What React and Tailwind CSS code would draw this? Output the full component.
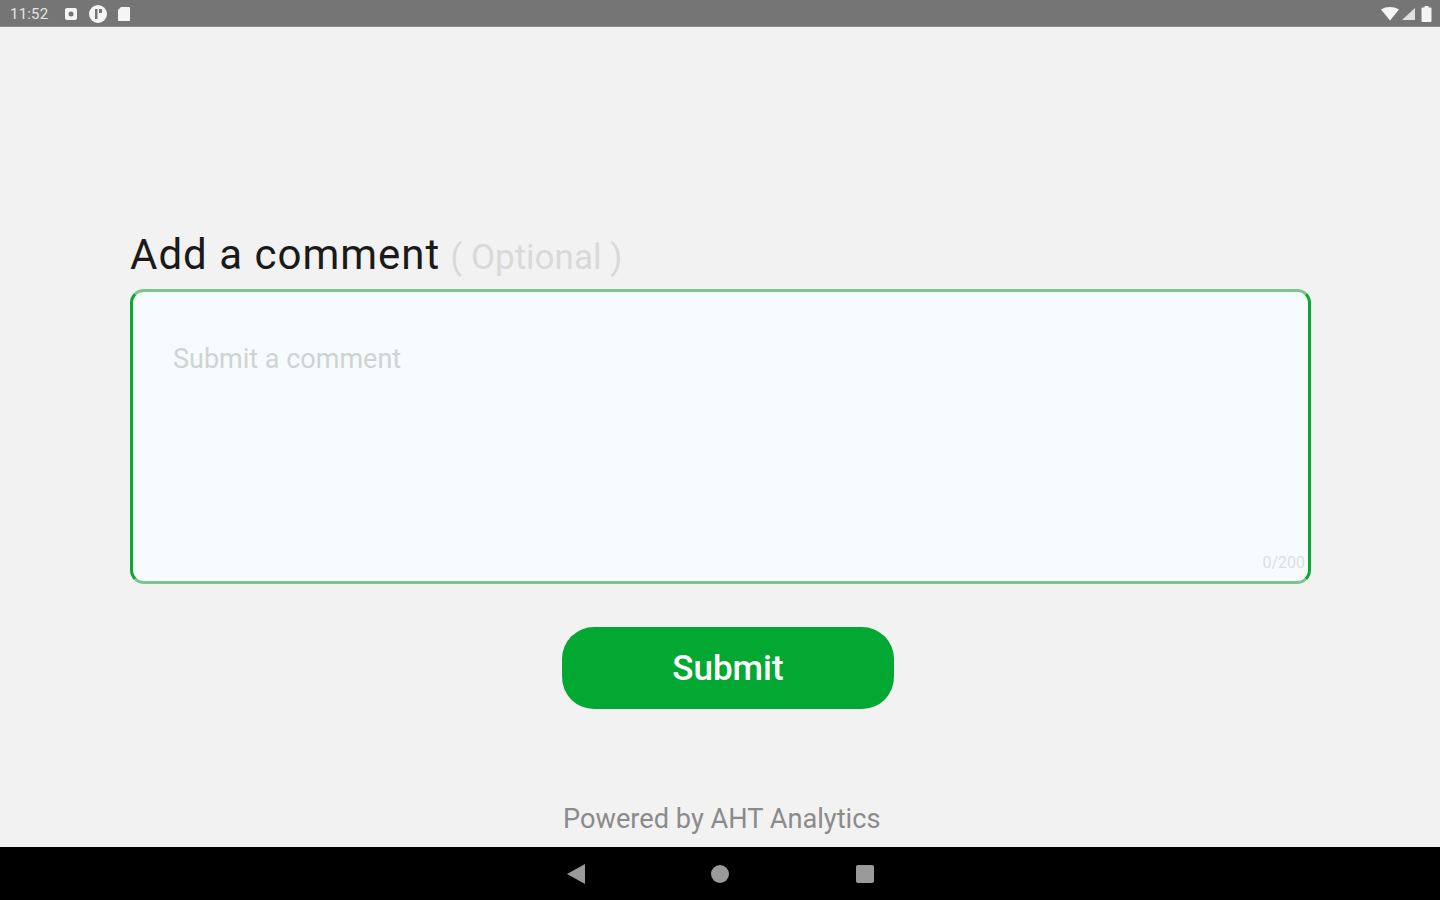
function StatusBar() {
  return (
    <div className="h-[27px] bg-[#757575] flex items-center justify-between pl-[10px] pr-[8px] pt-[1px] border-b border-[#8a8a8a]">
      <div className="flex items-center">
        <span className="text-[15px] text-[#e4e4e4] tracking-[0.2px] w-[54px] pt-[1px]">11:52</span>
        <svg className="w-[14px] h-[14px] mr-[10px]" viewBox="0 0 14 14">
          <rect x="1" y="1" width="12" height="12" rx="2" fill="#f5f5f5" />
          <circle cx="7" cy="7" r="2.500" fill="#757575" />
        </svg>
        <svg className="w-[20px] h-[20px] mr-[9px]" viewBox="0 0 20 20">
          <circle cx="10" cy="10" r="9" fill="#f5f5f5" />
          <path d="M7 5h2.500v10H7z" fill="#757575" />
          <path d="M11 5h3v4h-3z" fill="#757575" />
        </svg>
        <svg className="w-[14px] h-[16px]" viewBox="0 0 14 16">
          <path d="M4 1h8a1 1 0 0 1 1 1v12a1 1 0 0 1-1 1H2a1 1 0 0 1-1-1V4z" fill="#f5f5f5" />
        </svg>
      </div>
      <div className="flex items-center gap-[2px]">
        <svg className="w-[18px] h-[14px]" viewBox="0 0 18 14">
          <path d="M0 2.500C5 -0.8 13 -0.8 18 2.500L9 13.500z" fill="#f5f5f5" />
        </svg>
        <svg className="w-[15px] h-[14px]" viewBox="0 0 15 14">
          <path d="M14 1v12H1z" fill="#e0e0e0" />
        </svg>
        <svg className="w-[11px] h-[16px] ml-[3px]" viewBox="0 0 11 16">
          <path d="M3.500 0h4v1.500h2a1 1 0 0 1 1 1V15a1 1 0 0 1-1 1h-8a1 1 0 0 1-1-1V2.500a1 1 0 0 1 1-1h2z" fill="#f5f5f5" />
        </svg>
      </div>
    </div>
  );
}

function NavBar() {
  return (
    <div className="h-[53px] bg-black flex items-center justify-center gap-[126.500px]">
      <svg className="w-[18px] h-[20px]" viewBox="0 0 18 20">
        <path d="M18 0v20L0 10z" fill="#9a9a9a" />
      </svg>
      <div className="w-[18px] h-[18px] rounded-full bg-[#9a9a9a]" />
      <div className="w-[18px] h-[18px] rounded-[2px] bg-[#9a9a9a]" />
    </div>
  );
}

export default function App() {
  return (
    <div className="h-[900px] flex flex-col bg-[#f2f2f2] font-['Roboto',sans-serif]">
      <StatusBar />
      <main className="flex-1 flex flex-col px-[130px] pt-[203px]">
        <div className="flex items-baseline h-[59px]">
          <h1 className="text-[42px] leading-[50px] tracking-[1px] text-[#1a1a1a]">Add a comment</h1>
          <span className="ml-[10px] text-[35px] text-[#d9d9d9]">( Optional )</span>
        </div>
        <div className="relative h-[295px] w-[1181px] bg-[#f6fbfe] rounded-[14px] border-[3px] border-[#0aa831] border-y-[#7cc68b] pl-[40px] pt-[49px]">
          <p className="text-[27px] leading-[36px] text-[#cfd3d4]">Submit a comment</p>
          <span className="absolute right-[3px] bottom-[6px] text-[16px] text-[#dcdfe0]">0/200</span>
        </div>
        <button className="mt-[43px] ml-[432px] w-[332px] h-[82px] pt-[3px] rounded-[32px] bg-[#03a832] text-white text-[35px] font-medium">
          Submit
        </button>
        <p className="mt-[93px] ml-[433px] text-[27.200px] leading-[34px] text-[#8b8b8b]">Powered by AHT Analytics</p>
      </main>
      <NavBar />
    </div>
  );
}
